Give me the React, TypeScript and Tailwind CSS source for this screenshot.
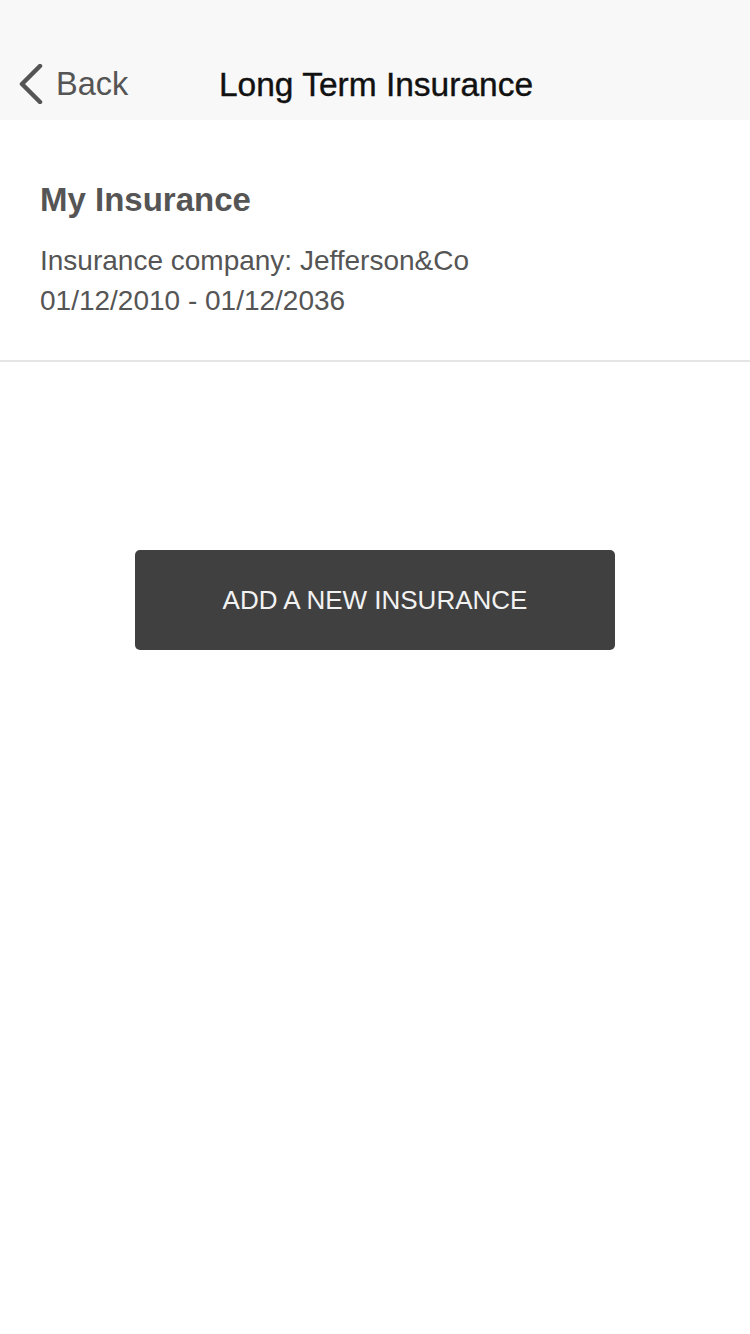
export default function App() {
  return (
    <div
      className="min-h-screen w-[750px] bg-white"
      style={{ fontFamily: '"Liberation Sans", Arial, sans-serif' }}
    >
      {/* Nav bar */}
      <div className="relative flex h-[120px] items-end bg-[#f8f8f8] pb-[14px]">
        <div className="flex items-center pl-[18px]">
          <svg width="26" height="40" viewBox="0 0 26 40" fill="none">
            <path d="M22 2 L4 20 L22 38" stroke="#555555" strokeWidth="4.5" strokeLinecap="round" strokeLinejoin="round" />
          </svg>
          <span className="ml-[12px] text-[32.5px] leading-[44px] text-[#555555]">Back</span>
        </div>
        <div className="absolute bottom-[13px] left-0 right-0 pl-[2px] text-center text-[33.5px] leading-[44px] text-[#111111] [-webkit-text-stroke:0.4px_#111111]">
          Long Term Insurance
        </div>
      </div>

      {/* Insurance card */}
      <div className="border-b-2 border-[#e5e5e5] px-[40px] pb-[39px]">
        <div className="pt-[58px]">
          <h2 className="text-[33px] font-bold leading-[44px] text-[#555555]">My Insurance</h2>
          <p className="mt-[19px] text-[28px] leading-[40px] text-[#555555]">Insurance company: Jefferson&amp;Co</p>
          <p className="text-[28px] leading-[40px] text-[#555555]">01/12/2010 - 01/12/2036</p>
        </div>
      </div>

      {/* Action */}
      <div className="flex justify-center pt-[188px]">
        <button className="flex h-[100px] w-[480px] items-center justify-center rounded-[5px] bg-[#404040] text-[26px] text-[#f2f2f2]">
          ADD A NEW INSURANCE
        </button>
      </div>
    </div>
  );
}
